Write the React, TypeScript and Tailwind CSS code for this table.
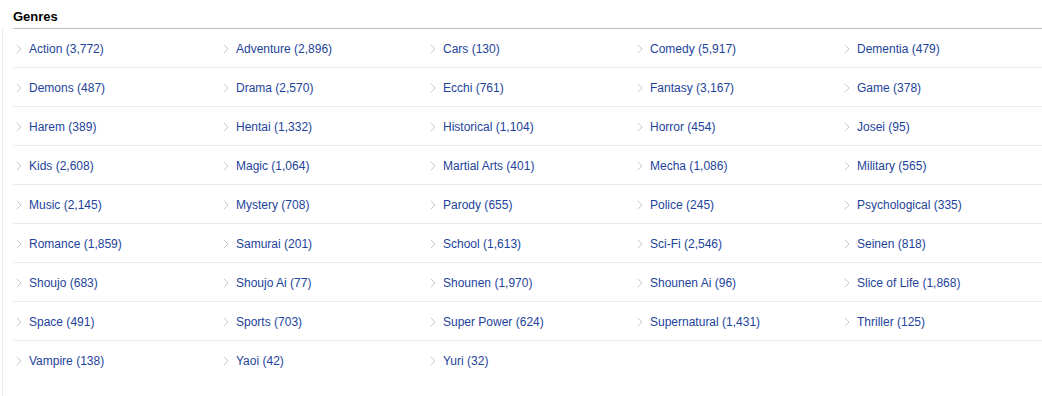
const genres: [string, string][] = [
  ["Action", "3,772"],
  ["Adventure", "2,896"],
  ["Cars", "130"],
  ["Comedy", "5,917"],
  ["Dementia", "479"],
  ["Demons", "487"],
  ["Drama", "2,570"],
  ["Ecchi", "761"],
  ["Fantasy", "3,167"],
  ["Game", "378"],
  ["Harem", "389"],
  ["Hentai", "1,332"],
  ["Historical", "1,104"],
  ["Horror", "454"],
  ["Josei", "95"],
  ["Kids", "2,608"],
  ["Magic", "1,064"],
  ["Martial Arts", "401"],
  ["Mecha", "1,086"],
  ["Military", "565"],
  ["Music", "2,145"],
  ["Mystery", "708"],
  ["Parody", "655"],
  ["Police", "245"],
  ["Psychological", "335"],
  ["Romance", "1,859"],
  ["Samurai", "201"],
  ["School", "1,613"],
  ["Sci-Fi", "2,546"],
  ["Seinen", "818"],
  ["Shoujo", "683"],
  ["Shoujo Ai", "77"],
  ["Shounen", "1,970"],
  ["Shounen Ai", "96"],
  ["Slice of Life", "1,868"],
  ["Space", "491"],
  ["Sports", "703"],
  ["Super Power", "624"],
  ["Supernatural", "1,431"],
  ["Thriller", "125"],
  ["Vampire", "138"],
  ["Yaoi", "42"],
  ["Yuri", "32"],
];

function Chevron() {
  return (
    <svg width="6" height="10" viewBox="0 0 6 10" className="shrink-0">
      <path d="M0.8 0.8 L5 5 L0.8 9.2" fill="none" stroke="#c8c8c8" strokeWidth="1" />
    </svg>
  );
}

export default function App() {
  const rows: [string, string][][] = [];
  for (let i = 0; i < genres.length; i += 5) rows.push(genres.slice(i, i + 5));

  return (
    <div className="w-[1042px] h-[396px] bg-white font-['Liberation_Sans',Arial,sans-serif] text-[12px] overflow-hidden">
      {/* Header */}
      <div className="pl-[13px] pt-[9px]">
        <h2 className="text-[13px] font-bold text-black leading-[16px] pb-[3px] border-b border-[#bebebe]">
          Genres
        </h2>
      </div>

      {/* Genre list */}
      <div className="ml-[2px] border-l border-[#e8e8e8] pl-[10px] min-h-[370px]">
        {rows.map((row, r) => (
          <div
            key={r}
            className={`grid grid-cols-[repeat(5,207px)] h-[39px] ${
              r < rows.length - 1 ? "border-b border-[#ebebeb]" : ""
            }`}
          >
            {row.map(([name, count]) => (
              <a
                key={name}
                href="#"
                className="flex items-center h-[38px] pl-[3px] pt-[2px] text-[#1d439b] hover:underline"
              >
                <Chevron />
                <span className="ml-[7px] leading-[14px]">
                  {name} ({count})
                </span>
              </a>
            ))}
          </div>
        ))}
      </div>
    </div>
  );
}
